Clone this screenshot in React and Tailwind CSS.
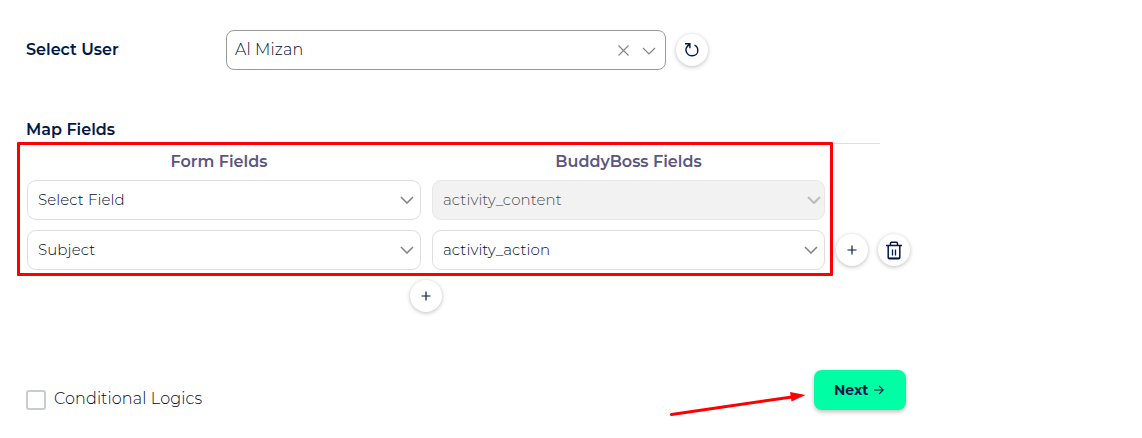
import React from "react";

function Chevron({ className = "text-[#858585]", thick = 1.6, size = 14 }) {
  return (
    <svg className={`shrink-0 ${className}`} width={size} height="8" viewBox="0 0 14 8" fill="none" stroke="currentColor" strokeWidth={thick} preserveAspectRatio="none">
      <path d="M1 1l6 6 6-6" />
    </svg>
  );
}

function RoundButton({ label, children, className = "" }) {
  return (
    <button aria-label={label} className={`flex h-8 w-8 shrink-0 items-center justify-center rounded-full bg-white text-[#00194a] shadow-[0_1px_4px_rgba(0,0,0,0.26)] ${className}`}>
      {children}
    </button>
  );
}

function Plus() {
  return (
    <svg className="-mt-px" width="10" height="10" viewBox="0 0 10 10" stroke="currentColor" strokeWidth="1.2">
      <path d="M5 .5v9M.5 5h9" />
    </svg>
  );
}

function Trash() {
  return (
    <svg className="mt-px" width="18" height="19" viewBox="0 0 18 19" fill="none" stroke="currentColor" strokeWidth="1.5">
      <path d="M1 4.500h16M5.500 4V2.300Q5.500 1.200 6.600 1.200h4.800q1.100 0 1.100 1.100V4M3.200 5v11.500q0 1.300 1.300 1.300h9q1.300 0 1.300-1.300V5" />
      <path d="M7.500 8.500v6M10.500 8.500v6" strokeWidth="1.3" />
      <path d="M3.500 17h11" strokeWidth="1.200" />
    </svg>
  );
}

function Field({ text, disabled }) {
  return (
    <div className={`flex h-10 items-center justify-between rounded-[9px] border pl-[10px] ${disabled ? "border-[#e7e7e7] bg-[#f2f2f2] pr-[3px] text-[#4d4d4d]" : "border-[#dedede] bg-white pr-[6px] text-[#000b2b]"}`}>
      <span className="text-[15px] leading-5 font-light tracking-[0.1px]">{text}</span>
      {disabled ? <Chevron className="text-[#bcbec2]" thick={2.2} /> : <Chevron />}
    </div>
  );
}

export default function App() {
  return (
    <main className="relative h-[438px] w-[1142px] overflow-hidden bg-white pt-[30px] pl-[26px] font-['Montserrat','Inter',sans-serif] text-[#00194a]">
      <div className="flex h-10 items-center">
        <label className="w-[200px] text-[16px] leading-5 font-semibold">Select User</label>
        <div className="flex h-10 w-[440px] items-center rounded-[8px] border border-[#999] pr-[9px] pl-[8px] text-[#000b2b]">
          <span className="flex-1 text-[16px] leading-5 font-light tracking-[0.15px]">Al Mizan</span>
          <svg className="mr-[13px] text-[#858585]" width="11" height="11" viewBox="0 0 11 11" stroke="currentColor" strokeWidth="1.1">
            <path d="M.5.5l10 10M10.500.5l-10 10" />
          </svg>
          <Chevron className="mt-px text-[#858585]" thick={1.2} />
        </div>
        <RoundButton label="Refresh" className="ml-[10px]">
          <svg width="14" height="14" viewBox="0 0 14 14" fill="none" stroke="currentColor" strokeWidth="1.4">
            <path d="M0 .8h4.900v4.400M4.600 1.500C.8 3.300 .4 7.200 1.600 9.500C3 12.200 5.300 12.800 7.200 12.800C10.500 12.800 12.800 10.600 12.800 7.500C12.800 5 11.500 3.100 9.500 2.200" />
          </svg>
        </RoundButton>
      </div>

      <section className="mt-[50px]">
        <h2 className="h-[23px] text-[16px] leading-5 font-semibold">Map Fields</h2>
        <div className="h-px w-[854px] bg-[#dedede]" />
        <div className="ml-px grid w-[798px] grid-cols-[394px_393px] grid-rows-[18px_40px_40px] gap-x-[11px] gap-y-[10px] pt-2">
          <h3 className="h-5 pr-[10px] text-center text-[16px] leading-5 font-semibold text-[#5b5683]">Form Fields</h3>
          <h3 className="h-5 text-center text-[16px] leading-5 font-semibold text-[#5b5683]">BuddyBoss Fields</h3>
          <Field text="Select Field" />
          <Field text="activity_content" disabled />
          <Field text="Subject" />
          <div className="flex w-[478px] items-center">
            <div className="w-[393px] shrink-0">
              <Field text="activity_action" />
            </div>
            <RoundButton label="Add row" className="ml-[11px]"><Plus /></RoundButton>
            <RoundButton label="Delete row" className="ml-[10px]"><Trash /></RoundButton>
          </div>
        </div>
        <RoundButton label="Add field" className="mt-[10px] ml-[384px]"><Plus /></RoundButton>
      </section>

      <footer className="mt-[58px] flex h-10 w-[880px] items-start justify-between">
        <label className="flex pt-[19px]">
          <span className="mt-px h-5 w-5 rounded-[3px] border-2 border-[#c8cbd6]" />
          <span className="ml-2 text-[16px] leading-5 font-light tracking-[0.13px] text-[#000b2b]">Conditional Logics</span>
        </label>
        <button className="flex h-10 w-[92px] items-center rounded-[8px] bg-[#00ffa5] pl-5 text-[14px] leading-5 font-bold shadow-[0_2px_4px_rgba(0,0,0,0.25)]">
          Next
          <svg className="ml-[6px]" width="10" height="10" viewBox="0 0 10 10" fill="none" stroke="currentColor" strokeWidth="1.1">
            <path d="M0 5h9M5 .8L9.200 5 5 9.200" />
          </svg>
        </button>
      </footer>

      <div className="pointer-events-none absolute top-[142px] left-[17px] h-[134px] w-[816px] rounded-[1px] border-3 border-[#ff0000]" />
      <svg className="pointer-events-none absolute top-[388px] left-[666px]" width="144" height="32" viewBox="0 0 144 32">
        <path d="M5.500 26.500L126 9" stroke="#ff0000" strokeWidth="3" strokeLinecap="round" />
        <path d="M124 4l15.500 3L125.500 13.500z" fill="#ff0000" />
      </svg>
    </main>
  );
}
